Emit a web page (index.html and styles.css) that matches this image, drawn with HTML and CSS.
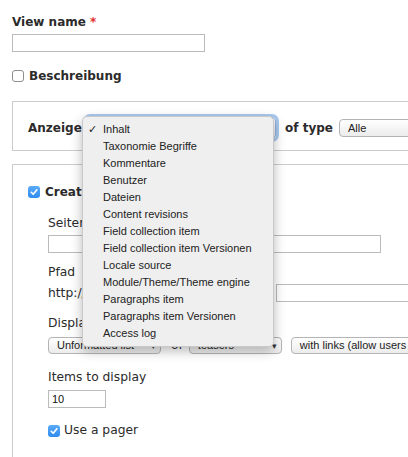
FILE: index.html
```html
<!DOCTYPE html>
<html>
<head>
<meta charset="utf-8">
<link rel="stylesheet" href="styles.css">
</head>
<body>
<div class="page">
  <div class="label-bold">View name <span class="req">*</span></div>
  <div class="text-input name-input"></div>

  <div class="check-row first-check">
    <span class="checkbox"></span>
    <span class="label-bold">Beschreibung</span>
  </div>

  <div class="fieldset fs-show">
    <div class="show-row">
      <span class="label-bold show-label">Anzeigen</span>
      <span class="select focus show-select"><span class="sel-text">Inhalt</span></span>
      <span class="label-bold oftype">of type</span>
      <span class="select type-select"><span class="sel-text">Alle</span></span>
    </div>
  </div>

  <div class="fieldset fs-page">
    <div class="check-row create-row">
      <span class="checkbox checked"><svg viewBox="0 0 12 12" width="12" height="12"><path d="M3.2 6.3 L5.2 8.3 L8.9 3.8" fill="none" stroke="#fff" stroke-width="1.6" stroke-linecap="round" stroke-linejoin="round"/></svg></span>
      <span class="label-bold">Create a page</span>
    </div>
    <div class="sub">
      <div class="label title-label">Seitentitel</div>
      <div class="text-input title-input"></div>
      <div class="label path-label">Pfad</div>
      <div class="path-row">
        <span class="label path-prefix">http://localhost/drupal/</span>
        <span class="text-input path-input"></span>
      </div>
      <div class="label display-label">Display format</div>
      <div class="format-row">
        <span class="select fmt-select"><span class="sel-text">Unformatted list</span><span class="arrow">▾</span></span>
        <span class="label of">of</span>
        <span class="select teaser-select"><span class="sel-text">teasers</span><span class="arrow">▾</span></span>
        <span class="select links-select"><span class="sel-text">with links (allow users to add comments, etc.)</span></span>
      </div>
      <div class="label items-label">Items to display</div>
      <div class="text-input items-input">10</div>
      <div class="check-row pager-row">
        <span class="checkbox checked"><svg viewBox="0 0 12 12" width="12" height="12"><path d="M3.2 6.3 L5.2 8.3 L8.9 3.8" fill="none" stroke="#fff" stroke-width="1.6" stroke-linecap="round" stroke-linejoin="round"/></svg></span>
        <span class="label">Use a pager</span>
      </div>
    </div>
  </div>
</div>

<div class="menu">
  <div class="item selected"><span class="tick">✓</span>Inhalt</div>
  <div class="item">Taxonomie Begriffe</div>
  <div class="item">Kommentare</div>
  <div class="item">Benutzer</div>
  <div class="item">Dateien</div>
  <div class="item">Content revisions</div>
  <div class="item">Field collection item</div>
  <div class="item">Field collection item Versionen</div>
  <div class="item">Locale source</div>
  <div class="item">Module/Theme/Theme engine</div>
  <div class="item">Paragraphs item</div>
  <div class="item">Paragraphs item Versionen</div>
  <div class="item">Access log</div>
</div>
</body>
</html>
```

FILE: styles.css
```css
html, body {
  margin: 0;
  padding: 0;
  background: #fff;
  overflow: hidden;
}
body {
  width: 408px;
  height: 457px;
  position: relative;
  font-family: "DejaVu Sans", sans-serif;
  color: #2b2b2b;
}
.page {
  padding: 14px 0 0 12px;
}
.label-bold {
  font: bold 12px/16px "DejaVu Sans", sans-serif;
  color: #2b2b2b;
  white-space: nowrap;
}
.req {
  color: #e0302e;
}
.label {
  font: 12.3px/17px "DejaVu Sans", sans-serif;
  color: #2b2b2b;
  white-space: nowrap;
}
.text-input {
  display: block;
  box-sizing: border-box;
  height: 18px;
  border: 1px solid #bbb;
  background: #fff;
  font: 11px/16px "Liberation Sans", sans-serif;
  color: #111;
  padding-left: 3px;
}
.name-input {
  margin-top: 4px;
  width: 193px;
}
.check-row {
  display: flex;
  align-items: center;
  height: 17px;
}
.first-check {
  margin-top: 15px;
}
.checkbox {
  box-sizing: border-box;
  width: 12px;
  height: 12px;
  border: 1px solid #8e8e8e;
  border-radius: 3px;
  background: #fff;
  margin-right: 5px;
  flex: 0 0 auto;
  display: flex;
}
.checkbox.checked {
  border: none;
  background: linear-gradient(#5aaaf8, #2f8cf0);
}
.fieldset {
  box-sizing: border-box;
  width: 420px;
  border: 1px solid #ccc;
  border-right: none;
}
.fs-show {
  margin-top: 17px;
  padding: 15px 0 11px 15px;
}
.show-row {
  display: flex;
  align-items: center;
  height: 22px;
}
.show-label {
  width: 52px;
  flex: 0 0 auto;
}
.select {
  box-sizing: border-box;
  position: relative;
  display: flex;
  align-items: center;
  height: 17px;
  border: 1px solid #b4b4b4;
  border-radius: 4px;
  background: linear-gradient(#ffffff, #ececec);
  font: 11px/15px "Liberation Sans", sans-serif;
  color: #222;
  white-space: nowrap;
  overflow: hidden;
  flex: 0 0 auto;
}
.sel-text {
  padding-left: 8px;
}
.arrow {
  position: absolute;
  right: 4px;
  top: 1px;
  font-size: 9px;
  color: #333;
}
.show-select {
  margin-left: 6px;
  width: 190px;
  height: 22px;
}
.focus {
  box-shadow: 0 0 0 3px #a9c9ef;
  border-color: #8fb3e0;
}
.oftype {
  margin-left: 9px;
}
.type-select {
  margin-left: 6px;
  width: 120px;
  height: 18px;
}
.fs-page {
  margin-top: 13px;
  height: 320px;
  padding: 18px 0 0 15px;
}
.create-row {
  height: 18px;
}
.sub {
  margin-left: 20px;
}
.title-label {
  margin-top: 14px;
}
.title-input {
  margin-top: 3px;
  width: 333px;
}
.path-label {
  margin-top: 11px;
}
.path-row {
  display: flex;
  align-items: center;
  margin-top: 3px;
  height: 18px;
}
.path-prefix {
  flex: 0 0 228px;
  overflow: hidden;
}
.path-input {
  width: 160px;
  flex: 0 0 auto;
}
.display-label {
  margin-top: 13px;
}
.format-row {
  display: flex;
  align-items: center;
  margin-top: 5px;
  height: 17px;
}
.fmt-select {
  width: 113px;
}
.of {
  margin: 0 6px 0 10px;
}
.teaser-select {
  width: 93px;
}
.links-select {
  margin-left: 9px;
  width: 160px;
}
.items-label {
  margin-top: 15px;
}
.items-input {
  margin-top: 4px;
  width: 58px;
}
.pager-row {
  margin-top: 14px;
}
.pager-row .checkbox {
  margin-right: 4px;
}
.menu {
  position: absolute;
  left: 82px;
  top: 116px;
  width: 192px;
  box-sizing: border-box;
  padding: 4px 0;
  background: #efefef;
  border: 1px solid #c9c9c9;
  border-radius: 5px;
  box-shadow: 0 4px 12px rgba(0, 0, 0, 0.28);
  font: 11px/17px "Liberation Sans", sans-serif;
  color: #222;
}
.item {
  position: relative;
  padding-left: 20px;
  height: 17px;
  white-space: nowrap;
}
.tick {
  position: absolute;
  left: 5px;
  top: 0;
  font: 11px/17px "DejaVu Sans", sans-serif;
}
```
